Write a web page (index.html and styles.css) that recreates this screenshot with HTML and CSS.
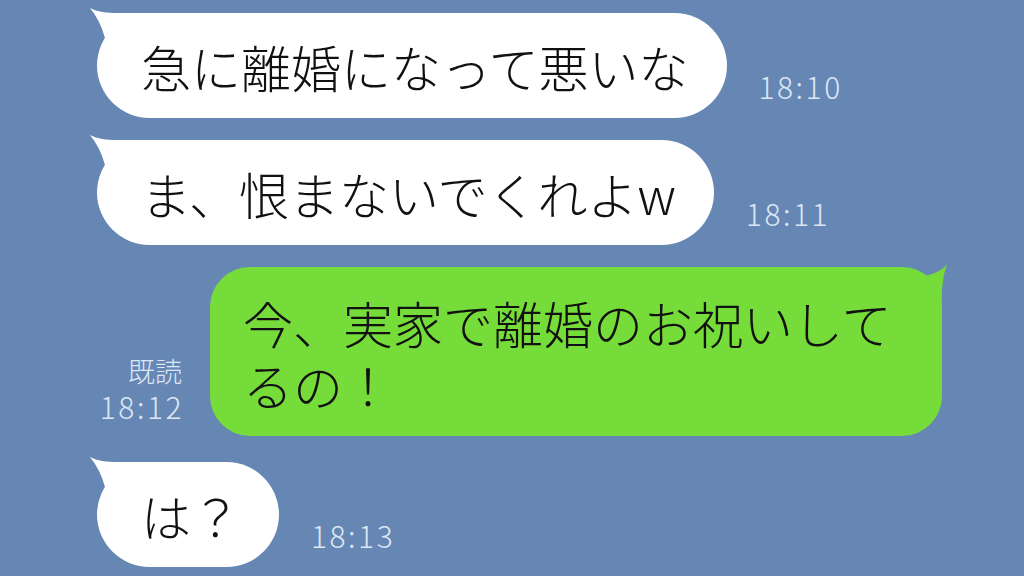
FILE: index.html
```html
<!DOCTYPE html>
<html lang="ja">
<head>
<meta charset="UTF-8" />
<meta name="viewport" content="width=device-width, initial-scale=1" />
<title>トーク</title>
<link rel="stylesheet" href="styles.css">
</head>
<body>

<div class="chat">

  <div class="row in">
    <div class="bubble white">
      <svg class="tail" viewBox="0 0 70 60" width="70" height="60"><path d="M1,1 C8,5 18,6 28,6 L60,6 L60,58 L9,58 L16,31 Q11,13 1,1 Z" /></svg>
      <span class="msg">急に離婚になって悪いな</span>
    </div>
    <div class="time">18:10</div>
  </div>

  <div class="row in">
    <div class="bubble white">
      <svg class="tail" viewBox="0 0 70 60" width="70" height="60"><path d="M1,1 C8,5 18,6 28,6 L60,6 L60,58 L9,58 L16,31 Q11,13 1,1 Z" /></svg>
      <span class="msg">ま、恨まないでくれよw</span>
    </div>
    <div class="time">18:11</div>
  </div>

  <div class="row out">
    <div class="meta">
      <div class="read">既読</div>
      <div class="time">18:12</div>
    </div>
    <div class="bubble green">
      <svg class="tail" viewBox="0 0 40 50" width="40" height="50"><path d="M11,15 C20,14 30,10 35,3 C32,12 29,24 30,50 L0,50 L0,16 Z" /></svg>
      <span class="msg">今、実家で離婚のお祝いしてるの！</span>
    </div>
  </div>

  <div class="row in last">
    <div class="bubble white">
      <svg class="tail" viewBox="0 0 70 60" width="70" height="60"><path d="M1,1 C8,5 18,6 28,6 L60,6 L60,58 L9,58 L16,31 Q11,13 1,1 Z" /></svg>
      <span class="msg">は？</span>
    </div>
    <div class="time">18:13</div>
  </div>

</div>

</body>
</html>
```

FILE: styles.css
```css
body {
  margin: 0;
  background: #6687b4;
  font-family: "Noto Sans CJK JP", "Noto Sans", sans-serif;
  width: 1024px;
  height: 576px;
  overflow: hidden;
}

.chat {
  display: flex;
  flex-direction: column;
  gap: 22px;
  padding-top: 13px;
}

.row {
  display: flex;
  align-items: flex-end;
  gap: 32px;
}
.row.in {
  padding-left: 97px;
}
.row.out {
  justify-content: flex-end;
  padding-right: 82px;
  gap: 28px;
}
.row.last {
  margin-top: 4px;
}

/* Bubbles */
.bubble {
  position: relative;
  font-size: 50px;
  font-weight: 300;
  line-height: 62px;
  color: #111;
}
.bubble.white {
  background: #fff;
  border-radius: 53px;
  padding: 22px 38px 21px 44px;
}
.bubble.green {
  background: #76dc3a;
  border-radius: 40px;
  padding: 24px 45px 21px 33px;
  max-width: 732px;
  box-sizing: border-box;
}
.msg {
  position: relative;
  z-index: 1;
}

.tail {
  position: absolute;
}
.white .tail {
  left: -8px;
  top: -6px;
  fill: #fff;
}
.green .tail {
  right: -10px;
  top: -6px;
  fill: #76dc3a;
}

/* Timestamps */
.time {
  font-size: 30px;
  font-weight: 300;
  line-height: 32px;
  letter-spacing: 2.5px;
  color: #dbe7f4;
  margin-bottom: 16px;
}
.meta {
  display: flex;
  flex-direction: column;
  align-items: flex-end;
  margin-bottom: 14px;
}
.meta .time {
  margin-bottom: 0;
  margin-right: -2px;
}
.read {
  font-size: 27px;
  font-weight: 300;
  line-height: 30px;
  color: #dbe7f4;
  margin-bottom: 4px;
}
```
